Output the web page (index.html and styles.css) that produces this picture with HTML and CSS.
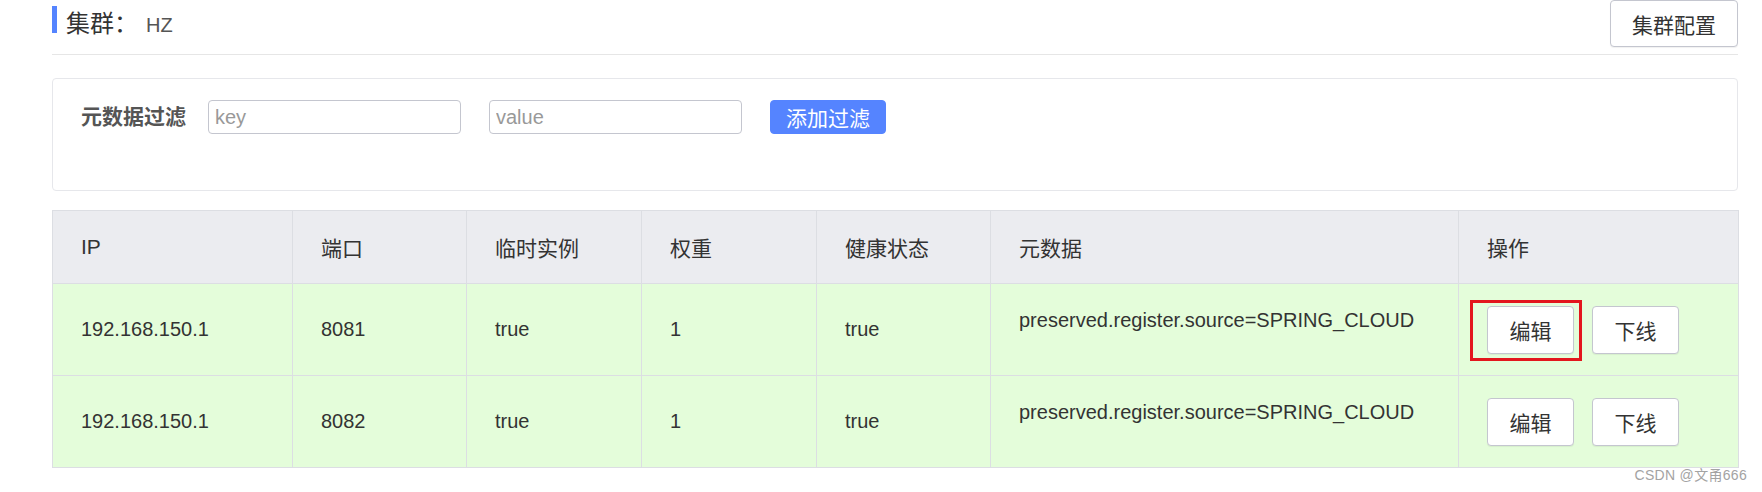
FILE: index.html
```html
<!DOCTYPE html>
<html lang="zh-CN">
<head>
    <meta charset="UTF-8">
    <meta name="viewport" content="width=device-width, initial-scale=1.0">
    <title>集群 HZ</title>
    <link rel="stylesheet" href="styles.css">
</head>
<body>

<div class="page">
    <div class="page-head">
        <h1 class="title">集群：<span class="cluster-name">HZ</span></h1>
        <button class="btn btn-head">集群配置</button>
    </div>

    <div class="filter-card">
        <label class="filter-label" for="meta_key">元数据过滤</label>
        <input class="filter-input" type="text" id="meta_key" placeholder="key">
        <input class="filter-input" type="text" id="meta_value" placeholder="value">
        <button class="btn btn-primary">添加过滤</button>
    </div>

    <table class="grid">
        <colgroup>
            <col style="width:240px">
            <col style="width:174px">
            <col style="width:175px">
            <col style="width:175px">
            <col style="width:174px">
            <col style="width:468px">
            <col style="width:280px">
        </colgroup>
        <thead>
            <tr>
                <th>IP</th>
                <th>端口</th>
                <th>临时实例</th>
                <th>权重</th>
                <th>健康状态</th>
                <th>元数据</th>
                <th>操作</th>
            </tr>
        </thead>
        <tbody>
            <tr>
                <td>192.168.150.1</td>
                <td>8081</td>
                <td>true</td>
                <td>1</td>
                <td>true</td>
                <td class="meta-cell">preserved.register.source=SPRING_CLOUD</td>
                <td>
                    <div class="ops">
                        <span class="marked"><button class="btn btn-sm">编辑</button></span>
                        <button class="btn btn-sm">下线</button>
                    </div>
                </td>
            </tr>
            <tr>
                <td>192.168.150.1</td>
                <td>8082</td>
                <td>true</td>
                <td>1</td>
                <td>true</td>
                <td class="meta-cell">preserved.register.source=SPRING_CLOUD</td>
                <td>
                    <div class="ops">
                        <button class="btn btn-sm">编辑</button>
                        <button class="btn btn-sm">下线</button>
                    </div>
                </td>
            </tr>
        </tbody>
    </table>
</div>

<div class="watermark">CSDN @文甬666</div>

</body>
</html>
```

FILE: styles.css
```css
body {
    margin: 0;
    font-family: "Liberation Sans", "Noto Sans CJK SC", sans-serif;
    color: #333;
    background: #fff;
}
.page {
    width: 1686px;
    padding-left: 52px;
}
.page-head {
    display: flex;
    justify-content: space-between;
    align-items: flex-start;
    height: 54px;
    border-bottom: 1px solid #e6e6e6;
}
.title {
    margin: 6px 0 0;
    height: 27px;
    line-height: 35px;
    padding-left: 9px;
    border-left: 5px solid #5584ff;
    font-size: 24px;
    font-weight: normal;
    color: #333;
}
.cluster-name {
    margin-left: 8px;
    font-size: 20px;
    color: #555;
}
.btn {
    font-family: inherit;
    background: #fff;
    color: #333;
    border: 1px solid #c4c6cf;
    border-radius: 4px;
    box-shadow: 0 1px 1px rgba(0, 0, 0, 0.06);
    cursor: pointer;
}
.btn-head {
    height: 47px;
    padding: 0 21px;
    font-size: 21px;
}
.filter-card {
    display: flex;
    align-items: flex-start;
    height: 113px;
    box-sizing: border-box;
    margin-top: 23px;
    padding: 21px 28px 0;
    border: 1px solid #e6e7eb;
    border-radius: 4px;
}
.filter-label {
    margin-right: 22px;
    line-height: 34px;
    font-size: 21px;
    font-weight: bold;
    color: #555;
}
.filter-input {
    width: 253px;
    height: 34px;
    box-sizing: border-box;
    margin-right: 28px;
    padding: 0 6px;
    border: 1px solid #c4c6cf;
    border-radius: 4px;
    font-family: inherit;
    font-size: 20px;
    color: #333;
    outline: none;
}
.filter-input::placeholder {
    color: #999;
}
.btn-primary {
    height: 34px;
    padding: 0 15px;
    font-size: 21px;
    background: #5584ff;
    border-color: #5584ff;
    color: #fff;
    box-shadow: none;
}
.grid {
    width: 1686px;
    margin-top: 19px;
    border-collapse: collapse;
    table-layout: fixed;
}
.grid thead tr {
    height: 73px;
}
.grid tbody tr {
    height: 92px;
}
.grid th,
.grid td {
    border: 1px solid #dcdee3;
    padding: 0 28px;
    text-align: left;
}
.grid th {
    background: #ebecf0;
    font-size: 21px;
    font-weight: normal;
    color: #333;
}
.grid td {
    background: #e4fdda;
    font-size: 20px;
}
.grid td.meta-cell {
    vertical-align: top;
    padding-top: 21px;
    line-height: 30px;
}
.ops {
    display: flex;
    gap: 18px;
}
.btn-sm {
    width: 87px;
    height: 48px;
    padding: 0;
    font-size: 21px;
}
.marked {
    position: relative;
    display: inline-flex;
}
.marked::after {
    content: "";
    position: absolute;
    left: -17px;
    top: -6px;
    width: 112px;
    height: 61px;
    box-sizing: border-box;
    border: 3px solid #e3161d;
}
.watermark {
    position: absolute;
    right: 15px;
    top: 467px;
    font-size: 14px;
    line-height: 16px;
    letter-spacing: 0.3px;
    color: #a3a3a3;
}
```
